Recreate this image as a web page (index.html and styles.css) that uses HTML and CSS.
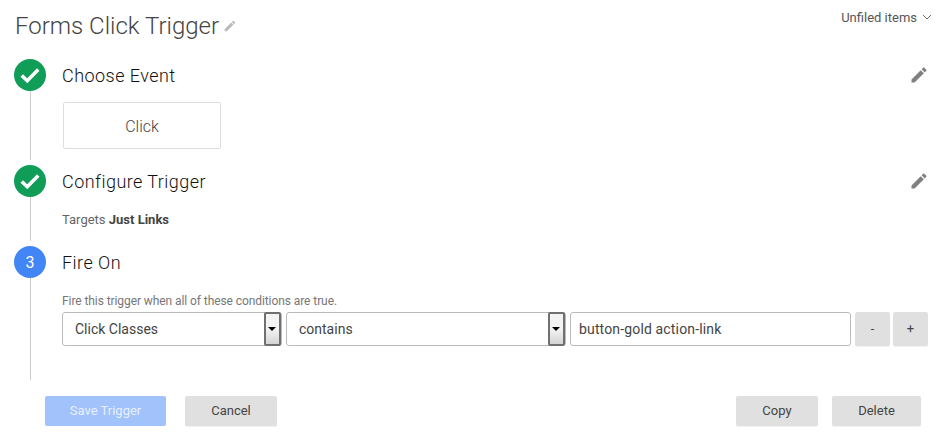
FILE: index.html
```html
<!DOCTYPE html>
<html lang="en">
<head>
    <meta charset="UTF-8">
    <meta name="viewport" content="width=device-width, initial-scale=1.0">
    <title>Forms Click Trigger</title>
    <link rel="stylesheet" href="styles.css">
</head>
<body>
    <div class="page">
        <div class="header">
            <h1 class="title">Forms Click Trigger</h1>
            <svg class="title-edit" viewBox="0 0 24 24"><path d="M3 17.25V21h3.75L17.81 9.94l-3.75-3.75L3 17.25zM20.71 7.04c.39-.39.39-1.02 0-1.41l-2.34-2.34c-.39-.39-1.02-.39-1.41 0l-1.83 1.83 3.75 3.75 1.83-1.83z"/></svg>
            <div class="folder">
                <span>Unfiled items</span>
                <svg class="chevron" viewBox="0 0 10 6"><path d="M1 1l4 4 4-4"/></svg>
            </div>
        </div>

        <div class="step step-event">
            <div class="rail">
                <div class="circle done">
                    <svg class="check" viewBox="0 0 20 20"><path d="M2.5 10.5l5 4.7L17.5 5"/></svg>
                </div>
                <div class="line"></div>
            </div>
            <div class="step-body">
                <div class="step-head">
                    <h2 class="step-title">Choose Event</h2>
                    <svg class="step-edit" viewBox="0 0 24 24"><path d="M3 17.25V21h3.75L17.81 9.94l-3.75-3.75L3 17.25zM20.71 7.04c.39-.39.39-1.02 0-1.41l-2.34-2.34c-.39-.39-1.02-.39-1.41 0l-1.83 1.83 3.75 3.75 1.83-1.83z"/></svg>
                </div>
                <div class="event-card">Click</div>
            </div>
        </div>

        <div class="step step-config">
            <div class="rail">
                <div class="circle done">
                    <svg class="check" viewBox="0 0 20 20"><path d="M2.5 10.5l5 4.7L17.5 5"/></svg>
                </div>
                <div class="line"></div>
            </div>
            <div class="step-body">
                <div class="step-head">
                    <h2 class="step-title">Configure Trigger</h2>
                    <svg class="step-edit" viewBox="0 0 24 24"><path d="M3 17.25V21h3.75L17.81 9.94l-3.75-3.75L3 17.25zM20.71 7.04c.39-.39.39-1.02 0-1.41l-2.34-2.34c-.39-.39-1.02-.39-1.41 0l-1.83 1.83 3.75 3.75 1.83-1.83z"/></svg>
                </div>
                <div class="targets">Targets <strong>Just Links</strong></div>
            </div>
        </div>

        <div class="step step-fire">
            <div class="rail">
                <div class="circle current">3</div>
                <div class="line"></div>
            </div>
            <div class="step-body">
                <div class="step-head">
                    <h2 class="step-title">Fire On</h2>
                </div>
                <div class="hint">Fire this trigger when all of these conditions are true.</div>
                <div class="filter-row">
                    <div class="select select-var">
                        <span class="select-text">Click Classes</span>
                        <span class="select-arrow"></span>
                    </div>
                    <div class="select select-op">
                        <span class="select-text">contains</span>
                        <span class="select-arrow"></span>
                    </div>
                    <input class="filter-input" type="text" value="button-gold action-link">
                    <button class="btn btn-small btn-minus">-</button>
                    <button class="btn btn-small">+</button>
                </div>
            </div>
        </div>

        <div class="footer">
            <button class="btn btn-primary">Save Trigger</button>
            <button class="btn btn-cancel">Cancel</button>
            <div class="footer-right">
                <button class="btn btn-copy">Copy</button>
                <button class="btn btn-delete">Delete</button>
            </div>
        </div>
    </div>
</body>
</html>
```

FILE: styles.css
```css
* {
    box-sizing: border-box;
}

body {
    margin: 0;
    background-color: white;
    font-family: Roboto, Arial, sans-serif;
    color: #444;
}

.page {
    width: 946px;
    height: 437px;
    overflow: hidden;
    padding: 0 14px;
}

.header {
    display: flex;
    align-items: flex-start;
    height: 59px;
}

.title {
    margin: 11px 0 0 1px;
    font-size: 24px;
    line-height: 30px;
    font-weight: 300;
    color: #444;
}

.title-edit {
    width: 14px;
    height: 14px;
    margin: 19px 0 0 4px;
    fill: #bbb;
}

.folder {
    display: flex;
    align-items: center;
    margin: 10px 0 0 auto;
    font-size: 13px;
    line-height: 16px;
    color: #555;
}

.chevron {
    width: 10px;
    height: 6px;
    margin-left: 5px;
    margin-top: -3px;
    fill: none;
    stroke: #666;
    stroke-width: 1;
}

.step {
    display: flex;
    gap: 16px;
}

.step-event {
    height: 106px;
}

.step-config {
    height: 81px;
}

.step-fire {
    height: 134px;
}

.rail {
    display: flex;
    flex-direction: column;
    align-items: center;
    width: 32px;
    padding-bottom: 5px;
}

.step-fire .rail {
    padding-bottom: 0;
}

.circle {
    display: flex;
    align-items: center;
    justify-content: center;
    flex: none;
    width: 32px;
    height: 32px;
    border-radius: 50%;
    color: white;
    font-size: 16px;
    font-weight: 400;
}

.done {
    background-color: #0f9d58;
}

.current {
    background-color: #4285f4;
}

.check {
    width: 22px;
    height: 22px;
    fill: none;
    stroke: white;
    stroke-width: 3.2;
}

.line {
    flex: 1;
    width: 1px;
    background-color: #ccc;
}

.step-body {
    flex: 1;
    min-width: 0;
}

.step-head {
    display: flex;
    align-items: center;
    justify-content: space-between;
    height: 32px;
}

.step-title {
    margin: 0;
    font-size: 18px;
    font-weight: 300;
    letter-spacing: 0.45px;
    color: #111;
}

.step-edit {
    width: 20px;
    height: 20px;
    margin-right: 3px;
    fill: #808080;
}

.event-card {
    display: flex;
    align-items: center;
    justify-content: center;
    width: 158px;
    height: 47px;
    margin-top: 11px;
    margin-left: 1px;
    padding-top: 1px;
    border: 1px solid #ddd;
    border-radius: 2px;
    font-size: 16px;
    font-weight: 300;
    color: #444;
}

.targets {
    margin-top: 15px;
    font-size: 13px;
    line-height: 16px;
    color: #666;
}

.targets strong {
    font-weight: 700;
    color: #444;
}

.hint {
    margin-top: 16px;
    font-size: 12px;
    line-height: 15px;
    letter-spacing: -0.08px;
    color: #777;
}

.filter-row {
    display: flex;
    margin-top: 3px;
}

.select {
    display: flex;
    align-items: stretch;
    height: 34px;
    margin-right: 4px;
    background-color: white;
    border: 1px solid #bbb;
    border-radius: 3px;
    font-size: 14px;
    color: #444;
}

.select-var {
    width: 220px;
}

.select-op {
    width: 280px;
}

.select-text {
    flex: 1;
    padding-left: 12px;
    line-height: 32px;
}

.select-arrow {
    position: relative;
    width: 17px;
    margin: -1px 0;
    border: 2px solid #707070;
    border-radius: 2px;
    background: linear-gradient(#f3f3f3 50%, #d4d4d4);
}

.select-arrow::after {
    content: "";
    position: absolute;
    top: 13px;
    left: 2px;
    border: 4px solid transparent;
    border-top: 4px solid black;
    border-bottom: 0;
}

.filter-input {
    width: 281px;
    height: 34px;
    margin: 0;
    padding: 0 8px;
    border: 1px solid #bbb;
    border-radius: 3px;
    font-family: Roboto, Arial, sans-serif;
    font-size: 14px;
    letter-spacing: 0.15px;
    color: #444;
}

.btn {
    height: 30px;
    padding: 0 0 2px;
    border: none;
    border-radius: 2px;
    background-color: #e0e0e0;
    box-shadow: 0 1px 1px rgba(0,0,0,0.06);
    font-family: Roboto, Arial, sans-serif;
    font-size: 13px;
    font-weight: 400;
    color: #444;
}

.btn-small {
    width: 35px;
    height: 34px;
    margin-left: 3px;
}

.btn-minus {
    margin-left: 4px;
}

.footer {
    display: flex;
    margin-top: 16px;
    padding-left: 31px;
}

.btn-primary {
    width: 121px;
    background-color: #a1c2fa;
    box-shadow: none;
    color: #e8f0fe;
}

.btn-cancel {
    width: 92px;
    margin-left: 19px;
}

.footer-right {
    display: flex;
    gap: 14px;
    margin-left: auto;
    margin-right: 11px;
}

.btn-copy {
    width: 82px;
}

.btn-delete {
    width: 89px;
}
```
